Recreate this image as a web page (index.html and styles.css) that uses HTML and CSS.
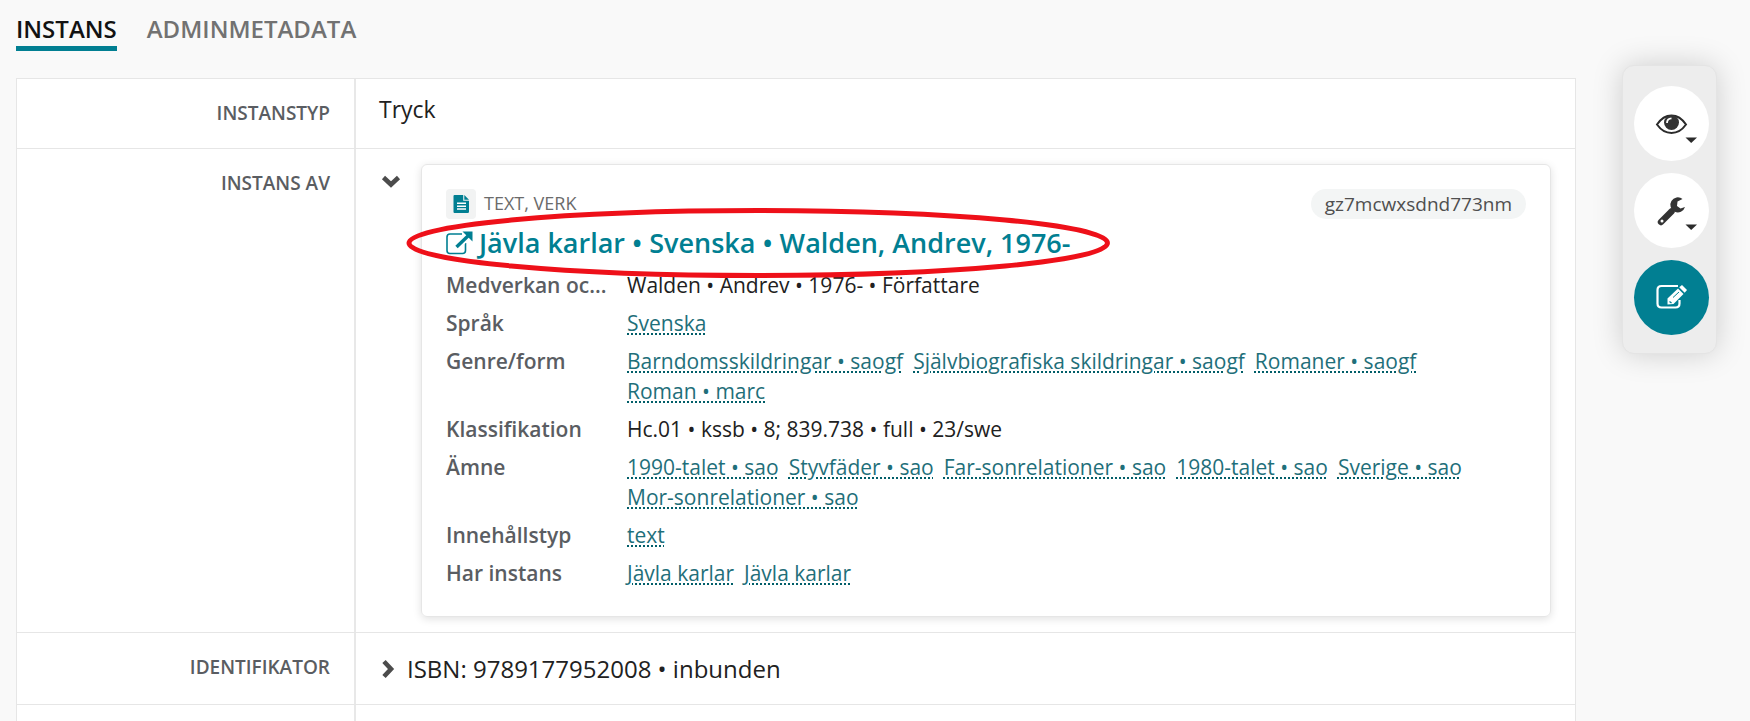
FILE: index.html
```html
<!DOCTYPE html>
<html lang="sv">
<head>
<meta charset="utf-8">
<meta name="viewport" content="width=device-width, initial-scale=1">
<title>Jävla karlar – Instans</title>
<link rel="stylesheet" href="styles.css">
</head>
<body>
<div class="page">
  <main class="main">
    <nav class="tabs">
      <a class="tab tab-active" href="#instans">INSTANS</a>
      <a class="tab" href="#admin">ADMINMETADATA</a>
    </nav>
    <section class="form">
      <div class="row">
        <div class="row-label">INSTANSTYP</div>
        <div class="row-value row-value-text">Tryck</div>
      </div>
      <div class="row">
        <div class="row-label">INSTANS AV</div>
        <div class="row-value row-value-card">
          <button class="toggle" type="button" aria-label="Dölj detaljer">
            <svg width="20" height="14" viewBox="0 0 20 14"><path d="M2.500 2.500 10 9.500 17.500 2.500" fill="none" stroke="#4c4c4c" stroke-width="4.600"/></svg>
          </button>
          <article class="card">
            <header class="card-top">
              <span class="type-icon">
                <svg width="17" height="20" viewBox="0 0 17 20"><path d="M1.500 1H10.200V6.800H16V17.700Q16 19 14.700 19H1.500Q.5 19 .5 18V2Q.5 1 1.500 1Z" fill="#017f92"/><path d="M11.300 1 16 5.700H11.300Z" fill="#017f92"/><path d="M4 9.300H13M4 12.200H13M4 15.100H13" stroke="#fff" stroke-width="1.500"/></svg>
              </span>
              <span class="type-name">TEXT, VERK</span>
              <span class="record-id">gz7mcwxsdnd773nm</span>
            </header>
            <h2 class="card-title">
              <a class="title-link" href="#verk">
                <svg class="title-icon" width="27" height="24" viewBox="0 0 27 24"><path d="M16 3H4Q1 3 1 6V19.500Q1 22.500 4 22.500H16.500Q19.500 22.500 19.500 19.500V12" fill="none" stroke="#017f92" stroke-width="1.600"/><path d="M10.500 16 22.500 4.500" stroke="#fff" stroke-width="7"/><path d="M10.500 16 22.500 4.500" stroke="#017f92" stroke-width="3.400"/><path d="M16.500.5H26.500V10.500Z" fill="#017f92"/></svg>
                <span>Jävla karlar • Svenska • Walden, Andrev, 1976-</span>
              </a>
              <svg class="marker" viewBox="0 0 704 70" preserveAspectRatio="none" aria-hidden="true"><ellipse cx="352" cy="35" rx="349" ry="32.500" fill="none" stroke="#ee1019" stroke-width="5"/></svg>
            </h2>
            <dl class="props">
              <dt>Medverkan oc...</dt>
              <dd>Walden • Andrev • 1976- • Författare</dd>
              <dt>Språk</dt>
              <dd><a href="#1">Svenska</a></dd>
              <dt>Genre/form</dt>
              <dd><a href="#2">Barndomsskildringar • saogf</a><a href="#3">Självbiografiska skildringar • saogf</a><a href="#4">Romaner • saogf</a><a href="#5">Roman • marc</a></dd>
              <dt>Klassifikation</dt>
              <dd>Hc.01 • kssb • 8; 839.738 • full • 23/swe</dd>
              <dt>Ämne</dt>
              <dd><a href="#6">1990-talet • sao</a><a href="#7">Styvfäder • sao</a><a href="#8">Far-sonrelationer • sao</a><a href="#9">1980-talet • sao</a><a href="#10">Sverige • sao</a><a href="#11">Mor-sonrelationer • sao</a></dd>
              <dt>Innehållstyp</dt>
              <dd><a href="#12">text</a></dd>
              <dt>Har instans</dt>
              <dd><a href="#13">Jävla karlar</a><a href="#14">Jävla karlar</a></dd>
            </dl>
          </article>
        </div>
      </div>
      <div class="row">
        <div class="row-label">IDENTIFIKATOR</div>
        <div class="row-value row-value-id">
          <button class="toggle-right" type="button" aria-label="Visa detaljer">
            <svg width="14" height="20" viewBox="0 0 14 20"><path d="M3 2.500 10 10 3 17.500" fill="none" stroke="#4c4c4c" stroke-width="4.600"/></svg>
          </button>
          <span>ISBN: 9789177952008 • inbunden</span>
        </div>
      </div>
      <div class="row row-rest">
        <div class="row-label"></div>
        <div class="row-value"></div>
      </div>
    </section>
  </main>
  <aside class="toolbar">
    <button class="tool" type="button" aria-label="Visa">
      <svg width="75" height="75" viewBox="0 0 75 75"><path d="M23 38.500Q29 29.500 37.500 29.500T52 38.500Q46 47 37.500 47T23 38.500Z" fill="none" stroke="#2b2b2b" stroke-width="2"/><circle cx="37.500" cy="36.500" r="7.500" fill="#333"/><path d="M33 37Q33 32.500 37.500 32.300" fill="none" stroke="#fff" stroke-width="1.800"/><path d="M51.500 51.500H63L57.200 57Z" fill="#2b2b2b"/></svg>
    </button>
    <button class="tool" type="button" aria-label="Verktyg">
      <svg width="75" height="75" viewBox="0 0 75 75"><path d="M37.500 38.500 27 49" stroke="#333" stroke-width="6.400" stroke-linecap="round"/><path d="M48.500 26A7.500 7.500 0 1 0 51 34L46.500 35.500 43 33 43.500 28.500Z" fill="#333"/><circle cx="28" cy="48" r="1.500" fill="#fff"/><path d="M51.500 51.500H63L57.200 57Z" fill="#2b2b2b"/></svg>
    </button>
    <button class="tool tool-primary" type="button" aria-label="Redigera">
      <svg width="75" height="75" viewBox="0 0 75 75"><path d="M44 26H27.500Q23.500 26 23.500 30V43.500Q23.500 47.500 27.500 47.500H41.500Q45.500 47.500 45.500 43.500V40" fill="none" stroke="#fff" stroke-width="2.200"/><path d="M33.500 44.500V38.500L44 28.500 49.500 34 39.500 44Z" fill="#fff"/><path d="M45.200 27.300 48 25 53 30 50.700 32.700Z" fill="#fff"/><path d="M39 37.500 45 32" stroke="#017f92" stroke-width="1"/><path d="M35.500 41.500 37.500 43" stroke="#017f92" stroke-width="1.300"/></svg>
    </button>
  </aside>
</div>
</body>
</html>
```

FILE: styles.css
```css
* {
  box-sizing: border-box;
}

body {
  margin: 0;
  background: #f9f9f9;
  color: #212121;
  font-family: "Open Sans", "Noto Sans", sans-serif;
  font-size: 21px;
  line-height: 31px;
}

button {
  padding: 0;
  border: 0;
  background: none;
  cursor: pointer;
}

svg {
  display: block;
}

.page {
  display: flex;
  align-items: flex-start;
  gap: 46px;
  height: 100vh;
  padding: 0 33px 0 16px;
  overflow: hidden;
}

.main {
  flex: 1;
  min-width: 0;
}

.tabs {
  display: flex;
  gap: 30px;
  padding-top: 13px;
  margin-bottom: 27px;
}

.tab {
  padding-bottom: 2px;
  border-bottom: 5px solid transparent;
  color: #727272;
  font-size: 24px;
  font-weight: 600;
  text-decoration: none;
}

.tab-active {
  border-bottom-color: #017f92;
  color: #121212;
}

.form {
  border: 1px solid #e6e6e6;
  border-bottom: 0;
  background: #fff;
}

.row {
  display: grid;
  grid-template-columns: 339px 1fr;
  border-bottom: 1px solid #e6e6e6;
}

.row-label {
  padding: 19px 24px 0 0;
  border-right: 2px solid #e8e8e8;
  color: #5a5d62;
  font-size: 19px;
  font-weight: 600;
  text-align: right;
}

.row-value {
  min-width: 0;
  padding: 0 24px 0 23px;
  font-size: 23px;
}

.row-value-text {
  padding-top: 15px;
  padding-bottom: 23px;
}

.row-value-card {
  display: flex;
  align-items: flex-start;
  gap: 20px;
  padding-top: 15px;
  padding-bottom: 15px;
}

.toggle {
  flex: none;
  padding: 11px 0 0 2px;
}

.card {
  flex: 1;
  min-width: 0;
  padding: 23px 24px 28px;
  border: 1px solid #e6e6e6;
  border-radius: 6px;
  box-shadow: 0 2px 8px rgba(0, 0, 0, 0.12);
}

.card-top {
  display: flex;
  align-items: center;
  gap: 8px;
  color: #6b6b6b;
  font-size: 18px;
}

.type-icon {
  display: grid;
  place-items: center;
  width: 30px;
  height: 30px;
  border-radius: 4px;
  background: #f2f3f3;
}

.record-id {
  margin-left: auto;
  padding: 0 14px;
  border-radius: 15px;
  background: #f3f5f5;
  color: #4f4f4f;
  font-size: 19px;
  line-height: 30px;
}

.card-title {
  position: relative;
  width: max-content;
  margin: 6px 0 9px;
  font-size: 27px;
  font-weight: 600;
  line-height: 36px;
}

.title-link {
  display: flex;
  align-items: center;
  gap: 6px;
  color: #017f92;
  text-decoration: none;
}

.marker {
  position: absolute;
  top: -17px;
  left: -40px;
  width: calc(100% + 80px);
  height: 70px;
  pointer-events: none;
}

.props {
  display: grid;
  grid-template-columns: 165px 1fr;
  gap: 8px 16px;
  margin: 0;
  font-size: 21px;
  line-height: 30px;
}

.props dt {
  color: #5a5d62;
  font-weight: 600;
  white-space: nowrap;
}

.props dd {
  display: flex;
  flex-wrap: wrap;
  column-gap: 10px;
  margin: 0;
}

.props a {
  color: #1f6f7a;
  text-decoration: underline dotted 2px #015e69;
  text-underline-offset: 2px;
}

.row-value-id {
  display: flex;
  align-items: center;
  gap: 12px;
  padding-top: 20px;
  padding-bottom: 20px;
  font-size: 24px;
}

.toggle-right {
  padding-left: 2px;
}

.row-rest {
  height: 80px;
}

.toolbar {
  display: flex;
  flex-direction: column;
  gap: 12px;
  margin-top: 65px;
  padding: 20px 7px 18px 11px;
  border: 1px solid #e4e4e4;
  border-radius: 12px;
  background: #ededed;
  box-shadow: 0 0 30px rgba(0, 0, 0, 0.18);
}

.tool {
  width: 75px;
  height: 75px;
  border-radius: 50%;
  background: #fff;
}

.tool-primary {
  background: #017f92;
}
```
